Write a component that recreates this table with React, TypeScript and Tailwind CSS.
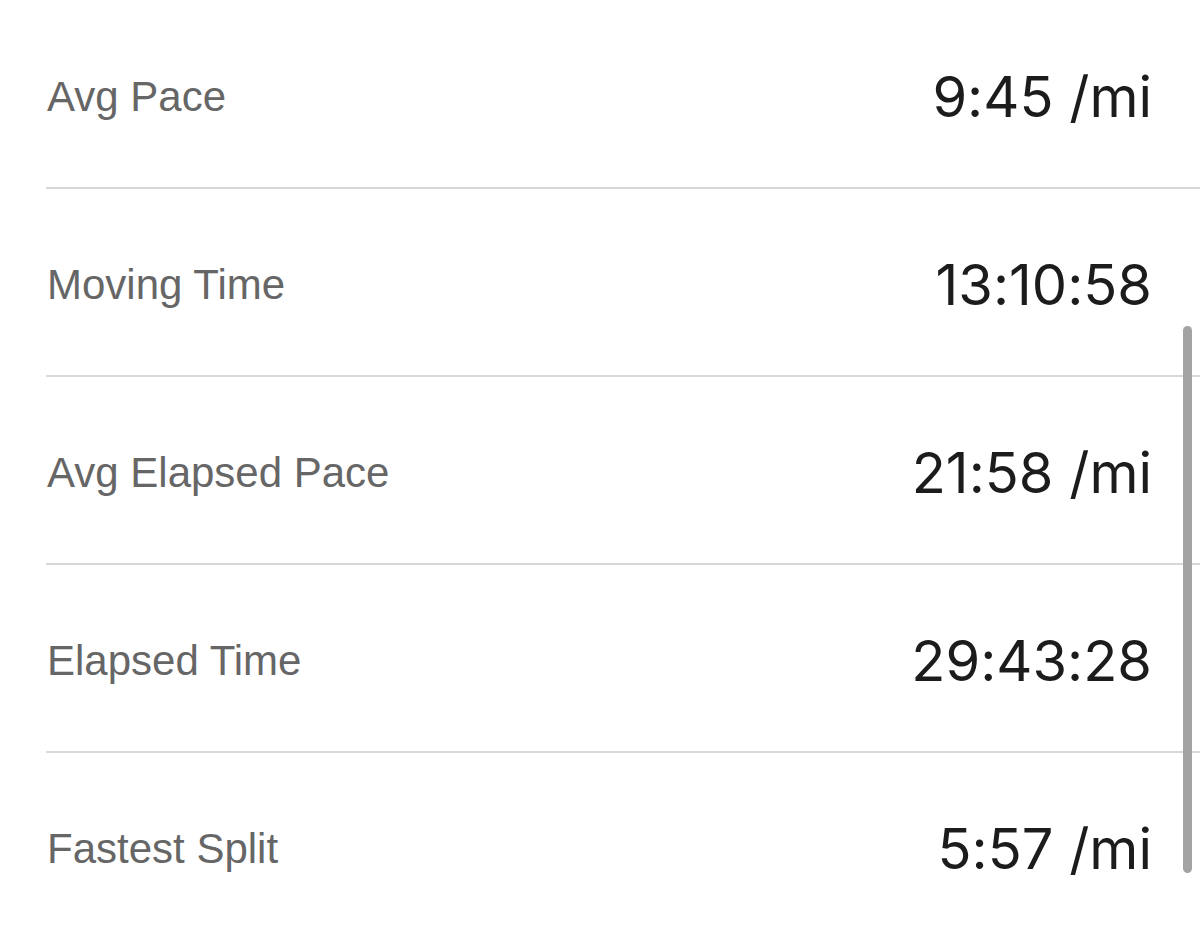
import React from "react";

const STATS = [
	{ label: "Avg Pace", value: "9:45 /mi" },
	{ label: "Moving Time", value: "13:10:58" },
	{ label: "Avg Elapsed Pace", value: "21:58 /mi" },
	{ label: "Elapsed Time", value: "29:43:28" },
	{ label: "Fastest Split", value: "5:57 /mi" },
];

export default function App() {
	return (
		<div className="relative w-[1200px] h-[948px] overflow-hidden bg-white pt-px">
			{STATS.map((s, i) => (
				<div key={s.label}>
					<div className="h-[186px] flex items-center justify-between pl-[47px] pr-[48px] pt-[5px]">
						<span className="font-['Liberation_Sans',Arial,sans-serif] text-[42px] text-[#666666]">
							{s.label}
						</span>
						<span className="font-['Inter','Liberation_Sans',sans-serif] text-[56px] text-[#1c1c1c] [font-feature-settings:'calt'_0]">
							{s.value}
						</span>
					</div>
					{i < STATS.length - 1 && <div className="ml-[46px] h-[2px] bg-[#d8d8d8]" />}
				</div>
			))}

			{/* scrollbar */}
			<div className="absolute left-[1183px] top-[326px] w-[9px] h-[547px] rounded-full bg-[#a3a3a3]" />
		</div>
	);
}
